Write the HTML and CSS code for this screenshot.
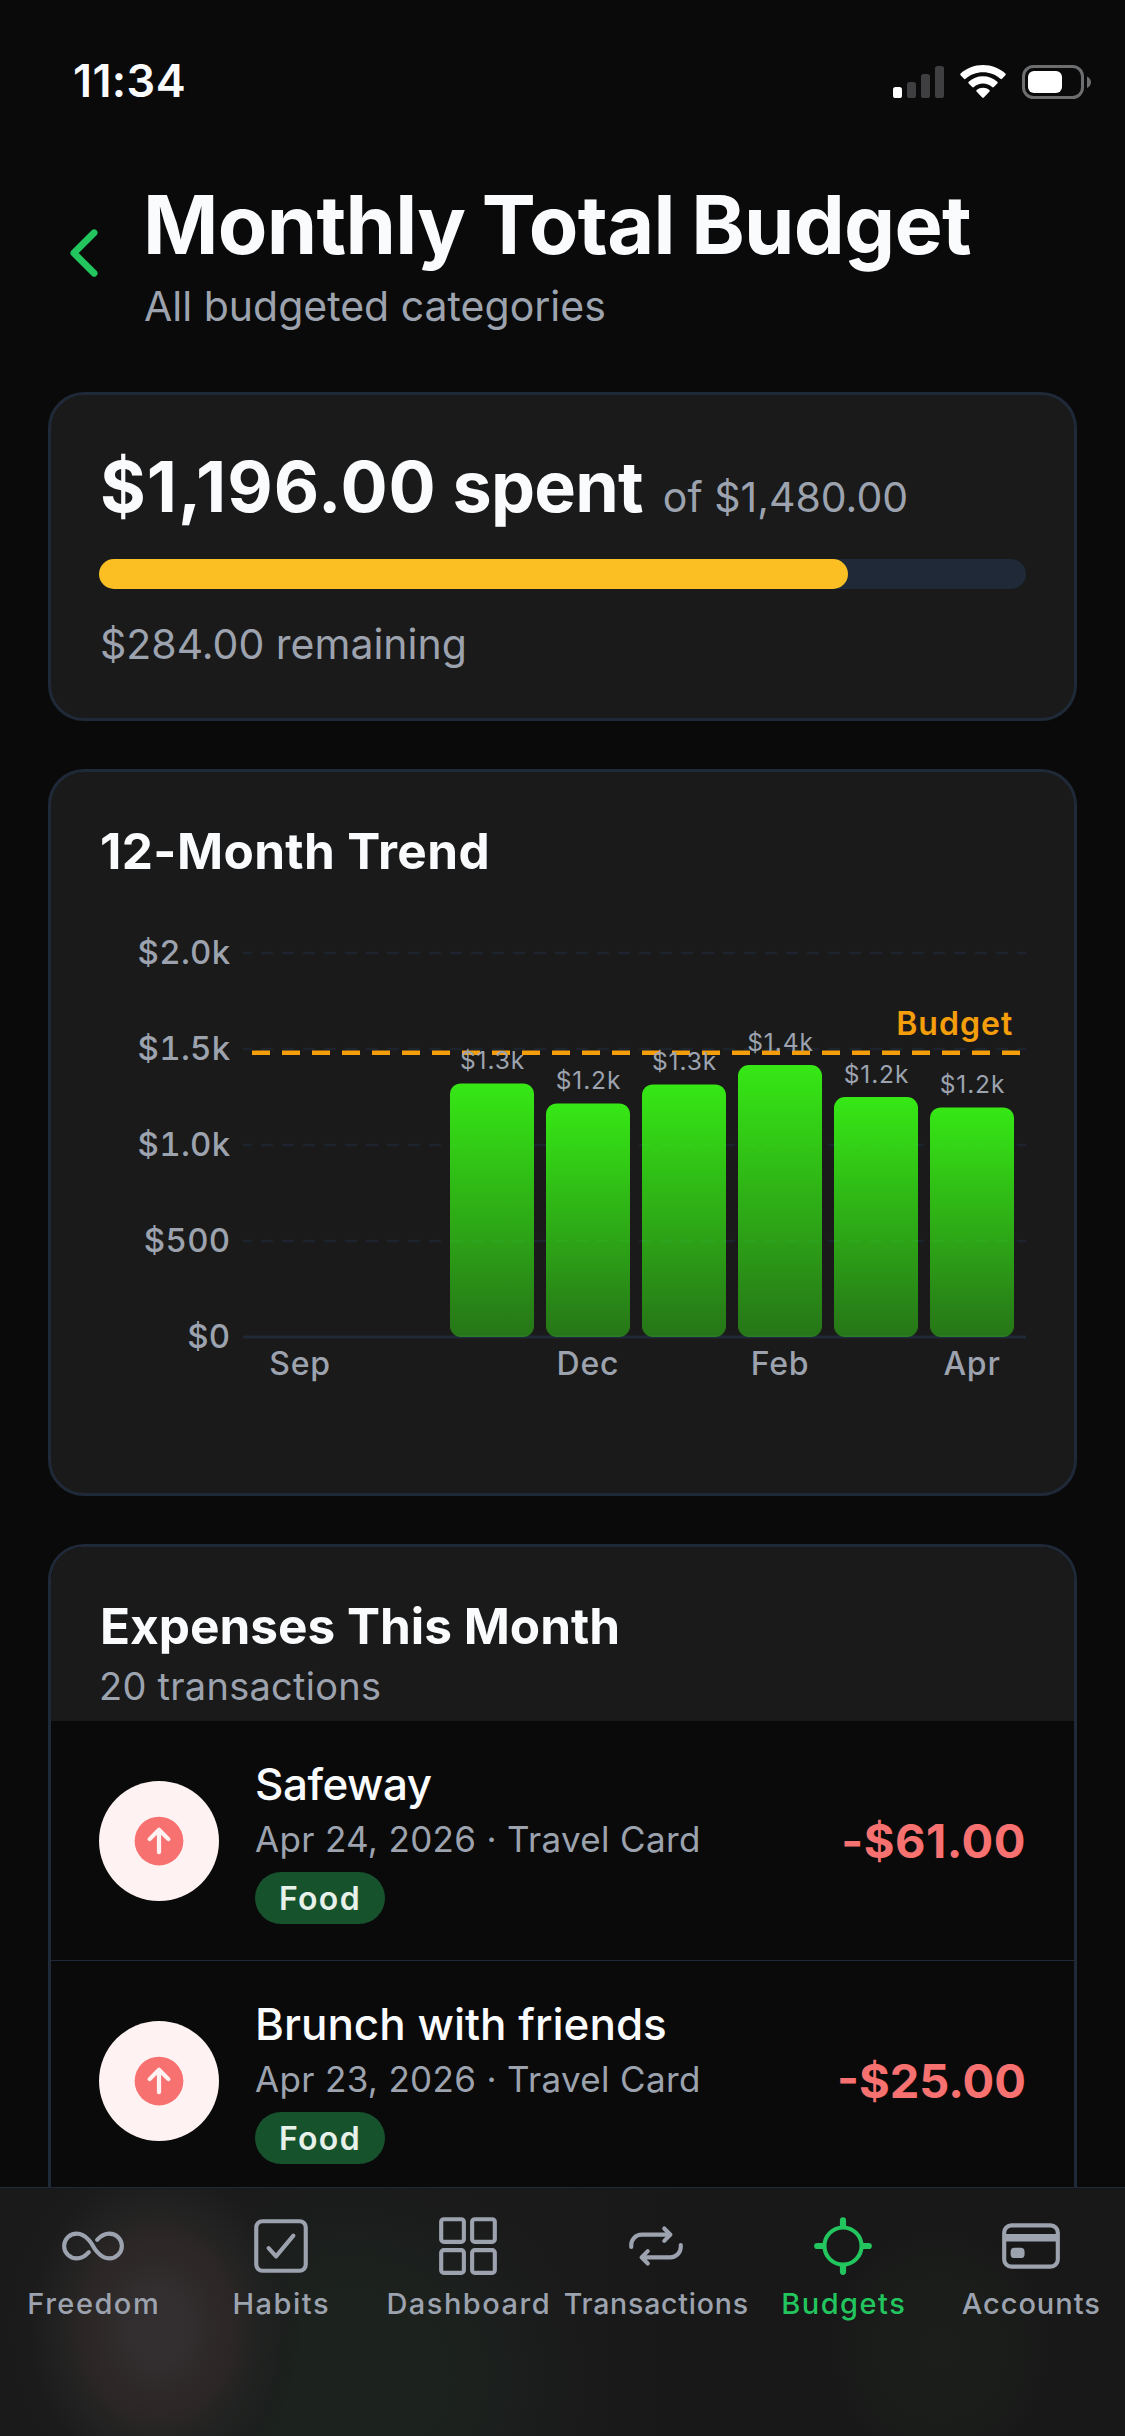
FILE: index.html
```
<!DOCTYPE html>
<html lang="en">
<head>
<meta charset="utf-8">
<title>Monthly Total Budget</title>
<link rel="stylesheet" href="styles.css">
</head>
<body>
<div class="screen">
  <main class="content">
    <div class="status">
      <span class="time">11:34</span>
      <svg class="status-icons" width="198" height="34" viewBox="0 0 198 34">
        <rect x="0" y="22" width="9" height="11" rx="2.6" fill="#fff"/>
        <g fill="#3f3f41">
          <rect x="14" y="17" width="9" height="16" rx="2.6"/>
          <rect x="28" y="9" width="9" height="24" rx="2.6"/>
          <rect x="42" y="1" width="9" height="32" rx="2.6"/>
        </g>
        <g fill="#fff">
          <path d="M67.6 10.3a1.2 1.2 0 0 1 0-1.7C73.600 3 81.400 0 90 0s16.400 3 22.400 8.600a1.200 1.200 0 0 1 0 1.700l-3.400 3.500a1.200 1.200 0 0 1-1.700 0C102.700 9.600 96.600 7.300 90 7.300s-12.700 2.300-17.300 6.500a1.200 1.200 0 0 1-1.700 0z"/>
          <path d="M75.700 18.500a1.200 1.200 0 0 1 0-1.700C79.500 13.300 84.500 11.300 90 11.300s10.500 2 14.300 5.500a1.200 1.200 0 0 1 0 1.700l-3.500 3.500a1.200 1.200 0 0 1-1.700 0C96.700 19.900 93.500 18.600 90 18.600s-6.700 1.300-9.100 3.400a1.200 1.200 0 0 1-1.700 0z"/>
          <path d="M83.700 26.700a1.100 1.100 0 0 1 0-1.700C85.400 23.500 87.600 22.700 90 22.700s4.600.8 6.300 2.300a1.100 1.100 0 0 1 0 1.700l-5.500 5.800a1.100 1.100 0 0 1-1.600 0z"/>
          <rect x="135" y="6" width="34" height="22" rx="6"/>
        </g>
        <rect x="130.500" y="1.500" width="59" height="31" rx="10" fill="none" stroke="#6c6e70" stroke-width="3"/>
        <path d="M194 11.500c2.300 1 4 3.200 4 5.700s-1.700 4.700-4 5.700z" fill="#6c6e70"/>
      </svg>
    </div>

    <header class="header">
      <svg class="back" width="72" height="72" viewBox="0 0 512 512"><path d="M328 112 184 256l144 144" fill="none" stroke="#22c55e" stroke-width="48" stroke-linecap="round" stroke-linejoin="round"/></svg>
      <div>
        <h1>Monthly Total Budget</h1>
        <p class="subtitle">All budgeted categories</p>
      </div>
    </header>

    <section class="card summary">
      <div class="amounts">
        <span class="spent"><span class="figure">$1,196.00</span> spent</span>
        <span class="of">of $1,480.00</span>
      </div>
      <div class="track"><div class="fill" style="width: 80.81%"></div></div>
      <p class="remaining">$284.00 remaining</p>
    </section>

    <section class="card trend">
      <h2>12-Month Trend</h2>
      <svg class="chart" width="927" height="563" viewBox="0 0 927 563">
        <defs>
          <linearGradient id="bar" x1="0" y1="0" x2="0" y2="1">
            <stop offset="0" stop-color="#39ff14" stop-opacity=".9"/>
            <stop offset="1" stop-color="#39ff14" stop-opacity=".4"/>
          </linearGradient>
        </defs>
        <g class="grid">
          <path d="M144 71H927M144 167H927M144 263H927M144 359H927"/>
        </g>
        <path class="axis" d="M144 455H927"/>
        <path class="budget-line" d="M153 170.800H921"/>
        <g fill="url(#bar)">
          <rect x="351" y="201.400" width="84" height="253.600" rx="11"/>
          <rect x="447" y="221.400" width="84" height="233.600" rx="11"/>
          <rect x="543" y="202.400" width="84" height="252.600" rx="11"/>
          <rect x="639" y="183" width="84" height="272" rx="11"/>
          <rect x="735" y="215" width="84" height="240" rx="11"/>
          <rect x="831" y="225.400" width="84" height="229.600" rx="11"/>
        </g>
        <g class="value">
          <text x="393.500" y="187">$1.3k</text>
          <text x="489.500" y="207">$1.2k</text>
          <text x="585.500" y="188">$1.3k</text>
          <text x="681.500" y="169">$1.4k</text>
          <text x="777.500" y="200.500">$1.2k</text>
          <text x="873.500" y="211">$1.2k</text>
        </g>
        <g class="y-label">
          <text x="131.500" y="82">$2.0k</text>
          <text x="131.500" y="178">$1.5k</text>
          <text x="131.500" y="274">$1.0k</text>
          <text x="131.500" y="370">$500</text>
          <text x="131.500" y="466">$0</text>
        </g>
        <g class="x-label">
          <text x="201" y="493">Sep</text>
          <text x="489" y="493">Dec</text>
          <text x="681" y="493">Feb</text>
          <text x="873" y="493">Apr</text>
        </g>
        <text class="budget-label" x="914.500" y="152.600">Budget</text>
      </svg>
    </section>

    <section class="card expenses">
      <div class="expenses-head">
        <h2>Expenses This Month</h2>
        <p class="count">20 transactions</p>
      </div>
      <article class="row">
        <div class="avatar"><svg width="60" height="60" viewBox="0 0 512 512"><circle cx="256" cy="256" r="208" fill="#f87171"/><path d="M176 240l80-80 80 80M256 171v181" fill="none" stroke="#fef2f2" stroke-width="36" stroke-linecap="round" stroke-linejoin="round"/></svg></div>
        <div class="info">
          <div class="name tight">Safeway</div>
          <div class="meta">Apr 24, 2026 · Travel Card</div>
          <span class="tag">Food</span>
        </div>
        <div class="amount loose">-$61.00</div>
      </article>
      <article class="row">
        <div class="avatar"><svg width="60" height="60" viewBox="0 0 512 512"><circle cx="256" cy="256" r="208" fill="#f87171"/><path d="M176 240l80-80 80 80M256 171v181" fill="none" stroke="#fef2f2" stroke-width="36" stroke-linecap="round" stroke-linejoin="round"/></svg></div>
        <div class="info">
          <div class="name">Brunch with friends</div>
          <div class="meta">Apr 23, 2026 · Travel Card</div>
          <span class="tag">Food</span>
        </div>
        <div class="amount">-$25.00</div>
      </article>
    </section>
  </main>

  <nav class="tabs">
    <a class="tab">
      <svg class="icon" viewBox="0 0 512 512"><path d="M256 256s-48-96-126-96c-54.120 0-98 43-98 96s43.880 96 98 96c37.510 0 71-22.410 94-48M256 256s48 96 126 96c54.120 0 98-43 98-96s-43.880-96-98-96c-37.510 0-71 22.410-94 48"/></svg>
      <span>Freedom</span>
    </a>
    <a class="tab">
      <svg class="icon" viewBox="0 0 512 512"><path d="M352 176 217.600 336 160 272"/><rect x="64" y="64" width="384" height="384" rx="48"/></svg>
      <span>Habits</span>
    </a>
    <a class="tab">
      <svg class="icon" viewBox="0 0 512 512"><rect x="48" y="48" width="176" height="176" rx="20"/><rect x="288" y="48" width="176" height="176" rx="20"/><rect x="48" y="288" width="176" height="176" rx="20"/><rect x="288" y="288" width="176" height="176" rx="20"/></svg>
      <span>Dashboard</span>
    </a>
    <a class="tab">
      <svg class="icon" viewBox="0 0 512 512"><path d="M320 120l48 48-48 48M352 168H144a80.240 80.240 0 0 0-80 80v16M192 392l-48-48 48-48M160 344h208a80.240 80.240 0 0 0 80-80v-16"/></svg>
      <span class="narrow">Transactions</span>
    </a>
    <a class="tab active">
      <svg class="icon" viewBox="0 0 512 512"><circle cx="256" cy="256" r="144"/><path stroke-width="48" d="M256 96V56M256 456v-40M416 256h40M56 256h40"/></svg>
      <span>Budgets</span>
    </a>
    <a class="tab">
      <svg class="icon" viewBox="0 0 512 512"><rect x="48" y="96" width="416" height="320" rx="56"/><path stroke-width="60" stroke-linecap="butt" d="M48 192h416"/><path stroke-width="60" d="M128 300h48v20h-48z"/></svg>
      <span class="close">Accounts</span>
    </a>
  </nav>
</div>
</body>
</html>
```
FILE: styles.css
```
* { box-sizing: border-box; }

body {
  margin: 0;
  background: #0a0a0a;
  color: #fafbfd;
  font-family: Inter, "Liberation Sans", sans-serif;
}

h1, h2, p { margin: 0; }

.screen {
  display: flex;
  flex-direction: column;
  width: 1125px;
  height: 2436px;
  overflow: hidden;
}

.content {
  flex: 1;
  min-height: 0;
  overflow: hidden;
  padding: 0 48px;
}

/* Status bar */
.status {
  display: flex;
  align-items: flex-start;
  justify-content: space-between;
  height: 174px;
  padding: 53px 0 0 25px;
}
.time {
  font-size: 45px;
  line-height: 56px;
  font-weight: 600;
  letter-spacing: 0.4px;
}
.status-icons { margin: 12px -14px 0 0; }

/* Header */
.header {
  display: flex;
  align-items: center;
  gap: 23px;
  height: 162px;
  margin-bottom: 56px;
}
.back { margin-bottom: 4px; }
h1 {
  font-size: 81px;
  line-height: 102px;
  font-weight: 700;
  letter-spacing: -0.72px;
  word-spacing: -2px;
  white-space: nowrap;
}
.subtitle, .of, .remaining {
  color: #9ca3af;
  font-size: 41px;
  line-height: 60px;
}
.subtitle { padding-left: 1px; }
.remaining { padding-left: 1px; }

/* Cards */
.card {
  margin-bottom: 48px;
  border: 3px solid #1f2937;
  border-radius: 36px;
  background: #1a1a1a;
}
h2 {
  padding-left: 1px;
  font-size: 49.5px;
  line-height: 62px;
  font-weight: 700;
}

.summary { padding: 48px 48px 44px; }
.amounts {
  display: flex;
  align-items: baseline;
  gap: 20px;
  height: 87px;
  padding-left: 1px;
}
.spent {
  font-size: 70px;
  line-height: 87px;
  font-weight: 700;
  letter-spacing: -0.8px;
}
.figure { letter-spacing: 1px; }
.track {
  height: 30px;
  margin: 29px 0 25px;
  border-radius: 15px;
  background: #1f2937;
}
.fill {
  height: 30px;
  border-radius: 15px;
  background: #fbbf24;
}

/* Trend chart */
.trend { padding: 48px; }
.trend h2 { letter-spacing: 0.4px; }
.chart { display: block; }
.grid {
  fill: none;
  stroke: #1f2937;
  stroke-opacity: 0.65;
  stroke-width: 2.5;
  stroke-dasharray: 12 9;
  stroke-dashoffset: 3;
}
.axis { stroke: #1f2937; stroke-width: 3; }
.budget-line {
  stroke: #f59e0b;
  stroke-width: 4.5;
  stroke-dasharray: 18 12;
}
.value, .y-label, .x-label { fill: #9ca3af; }
.value {
  font-size: 24.500px;
  letter-spacing: 0.9px;
  text-anchor: middle;
}
.y-label {
  font-size: 33px;
  font-weight: 500;
  font-variant-numeric: tabular-nums;
  letter-spacing: 0.3px;
  text-anchor: end;
}
.x-label {
  font-size: 32px;
  font-weight: 500;
  letter-spacing: 0.8px;
  text-anchor: middle;
}
.budget-label {
  fill: #f59e0b;
  font-size: 32px;
  font-weight: 600;
  letter-spacing: 1.08px;
  text-anchor: end;
}

/* Expenses */
.expenses {
  height: 960px;
  overflow: hidden;
  background: #0a0a0a;
}
.expenses-head {
  padding: 48px 48px 7px;
  background: #1a1a1a;
}
.count {
  margin-top: 1px;
  color: #9ca3af;
  font-size: 38px;
  line-height: 56px;
  letter-spacing: 0.26px;
}
.row {
  display: flex;
  align-items: center;
  height: 240px;
  padding: 0 48px;
  border-bottom: 1px solid #1f2937;
}
.avatar {
  display: flex;
  align-items: center;
  justify-content: center;
  width: 120px;
  height: 120px;
  margin-right: 36px;
  border-radius: 50%;
  background: #fef2f2;
}
.info {
  display: flex;
  flex: 1;
  flex-direction: column;
  align-items: flex-start;
  padding-bottom: 4px;
}
.name {
  font-size: 44px;
  line-height: 60px;
  font-weight: 500;
}
.tight { letter-spacing: -0.5px; }
.meta {
  margin: 2px 0 10px;
  color: #9ca3af;
  font-size: 35px;
  line-height: 46px;
  letter-spacing: 0.34px;
}
.tag {
  padding: 1px 24px 0;
  border-radius: 26px;
  background: #16532d;
  color: #e8f0ea;
  font-size: 32px;
  line-height: 51px;
  font-weight: 600;
  letter-spacing: 1.3px;
}
.amount {
  color: #f87171;
  font-size: 47px;
  font-weight: 700;
}
.loose { letter-spacing: 0.5px; }

/* Tab bar */
.tabs {
  display: grid;
  grid-template-columns: repeat(6, 1fr);
  height: 249px;
  padding-top: 25px;
  border-top: 1px solid #1f2937;
  background:
    radial-gradient(ellipse 145px 175px at 158px 138px, #332e2f 0%, #322d2e 22%, #2c2726 50%, rgba(34, 35, 34, 0.9) 68%, rgba(28, 29, 28, 0.5) 88%, rgba(26, 26, 26, 0) 100%),
    radial-gradient(ellipse 240px 210px at 350px 190px, #1c231e 0%, #1c211e 50%, rgba(28, 30, 28, 0) 100%),
    radial-gradient(ellipse 110px 120px at 940px 160px, #1b1e1b 0%, #1a1d1a 60%, rgba(24, 24, 24, 0) 100%),
    linear-gradient(90deg, #1a1a1a, #1a1a1a 50%, #181818 60%);
}
.tab {
  display: flex;
  flex-direction: column;
  align-items: center;
  gap: 7px;
  color: #9ca3af;
  font-size: 29px;
  line-height: 36px;
  font-weight: 550;
  letter-spacing: 1.5px;
  white-space: nowrap;
}
.active { color: #22c55e; }
.narrow { font-size: 28.500px; letter-spacing: 0.77px; }
.close { letter-spacing: 0.95px; }
.icon {
  width: 66px;
  height: 66px;
  margin-right: 1px;
  fill: none;
  stroke: currentColor;
  stroke-width: 32;
  stroke-linecap: round;
  stroke-linejoin: round;
}
```
